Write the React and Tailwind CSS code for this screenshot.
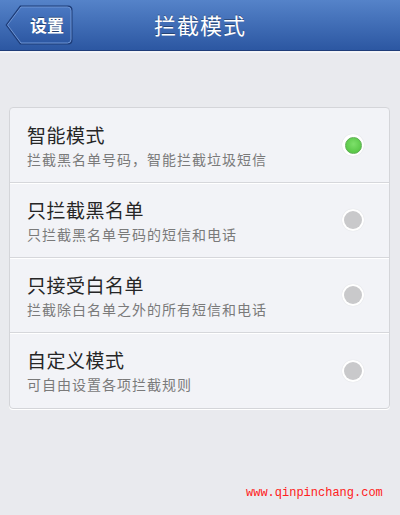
import React from "react";

const rows = [
  { t: "智能模式", s: "拦截黑名单号码，智能拦截垃圾短信", on: true },
  { t: "只拦截黑名单", s: "只拦截黑名单号码的短信和电话" },
  { t: "只接受白名单", s: "拦截除白名单之外的所有短信和电话" },
  { t: "自定义模式", s: "可自由设置各项拦截规则" },
];

function BackButton() {
  return (
    <div className="relative w-[70px] h-[42px]">
      <svg width="70" height="42" viewBox="0 0 70 42" className="absolute inset-0">
        <defs>
          <linearGradient id="bb" x1="0" y1="0" x2="0" y2="1">
            <stop offset="0" stopColor="#4a78c2" />
            <stop offset="1" stopColor="#2d58a3" />
          </linearGradient>
        </defs>
        <path d="M1.5 21 L16 1.5 H64 Q68.5 1.5 68.5 6 V36 Q68.5 40.5 64 40.5 H16 Z" fill="#1d3c78" />
        <path d="M3.5 21 L17 3 H63.5 Q67 3 67 6.5 V35.5 Q67 39 63.5 39 H17 Z" fill="url(#bb)" stroke="#6f96d6" strokeWidth="1" />
      </svg>
      <span className="absolute left-[20px] top-0 w-[46px] h-[42px] flex items-center justify-center text-white text-[17px] font-bold [text-shadow:0_-1px_0_rgba(0,0,0,0.35)]">
        设置
      </span>
    </div>
  );
}

export default function App() {
  return (
    <div
      className="relative w-[400px] h-[515px] bg-[#e9eaee] overflow-hidden"
      style={{ fontFamily: '"Noto Sans CJK SC", "Noto Sans", sans-serif' }}
    >
      <div className="h-[51px] bg-gradient-to-b from-[#5583c9] to-[#2c57a2] border-b border-[#1f3d78] flex items-center relative">
        <div className="pl-[4px]">
          <BackButton />
        </div>
        <div className="absolute inset-0 flex items-center justify-center text-white text-[22px] tracking-[1px] pb-[2px] [text-shadow:0_-1px_0_rgba(0,0,0,0.35)] pointer-events-none">
          拦截模式
        </div>
      </div>
      <div className="h-[2px] bg-[#f3f4f7]" />
      <div className="pt-[54px] px-[9px] pr-[10px]">
        <div className="bg-[#f2f3f7] border border-[#d4d5d9] rounded-[4px] shadow-[0_1px_0_#ffffff]">
          {rows.map((r, i) => (
            <div
              key={i}
              className={
                "h-[75px] flex items-start justify-between pl-[17px] pr-[25px] " +
                (i < rows.length - 1 ? "border-b border-[#d6d7db] shadow-[0_1px_0_#ffffff]" : "")
              }
            >
              <div className="pt-[15px]">
                <div className="text-[19px] leading-[24px] tracking-[0.5px] text-[#262626]">{r.t}</div>
                <div className="mt-[3px] text-[14px] leading-[18px] tracking-[1px] text-[#7a7a7a]">{r.s}</div>
              </div>
              <div className="self-center w-[22px] h-[22px] rounded-full bg-white flex items-center justify-center shadow-[0_0_1px_rgba(0,0,0,0.15)]">
                {r.on ? (
                  <div className="w-[17px] h-[17px] rounded-full bg-[radial-gradient(circle_at_50%_40%,#7de06a,#4cbf3a)] border border-[#5fae55]" />
                ) : (
                  <div className="w-[18px] h-[18px] rounded-full bg-[#c9c9cb]" />
                )}
              </div>
            </div>
          ))}
        </div>
      </div>
      <div
        className="absolute left-[246px] top-[485px] text-[12px] leading-[16px] text-[#ff2020]"
        style={{ fontFamily: '"Liberation Mono", monospace' }}
      >
        www.qinpinchang.com
      </div>
    </div>
  );
}
